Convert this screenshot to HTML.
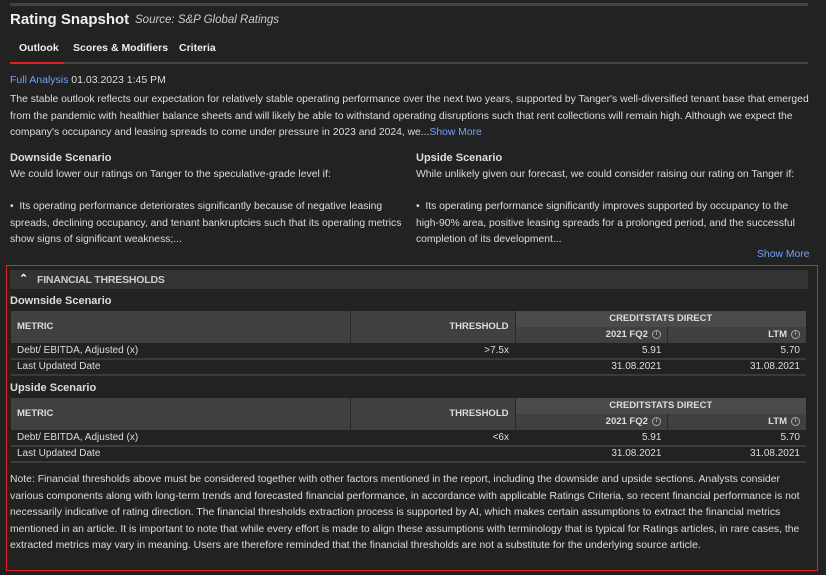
<!DOCTYPE html>
<html><head><style>
*{margin:0;padding:0;box-sizing:border-box}
body{width:826px;height:575px;background:#222;color:#ddd;font-family:"Liberation Sans",sans-serif;font-size:11px;position:relative;overflow:hidden}
.a{position:absolute;white-space:nowrap}
.p{position:absolute;left:10px;width:800px;line-height:16.5px;font-size:10.35px;white-space:normal}
.hl{color:#6fa3ff}
.b{font-weight:bold}
table{border-collapse:collapse;position:absolute;left:11px;width:795px;font-size:10px}
th{background:#404040;color:#ddd;font-weight:bold;font-size:9.5px;padding:0 6px;line-height:14px}
td{height:16px;padding:0 6px;border-bottom:2px solid #3a3a3a;line-height:14px}
.r{text-align:right}
.i{display:inline-block;width:9px;height:9px;border:1px solid #aaa;border-radius:50%;vertical-align:middle;margin-left:4px;font-size:6px;line-height:7px;text-align:center;font-weight:normal}
</style></head><body>
<div class="a" style="left:10px;top:3px;width:798px;height:3px;background:#444"></div>
<div class="a b" style="left:10px;top:11px;font-size:15px;color:#eee">Rating Snapshot</div>
<div class="a" style="left:135px;top:14px;font-size:11.5px;font-style:italic;color:#ccc">Source: S&amp;P Global Ratings</div>
<div class="a b" style="left:19px;top:42px;font-size:10.5px;color:#eee">Outlook</div>
<div class="a b" style="left:73px;top:42px;font-size:10.5px;color:#eee">Scores &amp; Modifiers</div>
<div class="a b" style="left:179px;top:42px;font-size:10.5px;color:#eee">Criteria</div>
<div class="a" style="left:10px;top:62px;width:798px;height:2px;background:#444"></div>
<div class="a" style="left:10px;top:62px;width:54px;height:2px;background:#e0202a"></div>
<div class="a" style="left:10px;top:74px;font-size:10.5px"><span class="hl">Full Analysis</span> 01.03.2023 1:45 PM</div>
<div class="p" style="top:92px;width:806px">The stable outlook reflects our expectation for relatively stable operating performance over the next two years, supported by Tanger's well-diversified tenant base that emerged from the pandemic with healthier balance sheets and will likely be able to withstand operating disruptions such that rent collections will remain high. Although we expect the company's occupancy and leasing spreads to come under pressure in 2023 and 2024, we...<span class="hl">Show More</span></div>
<div class="a b" style="left:10px;top:152px;font-size:11px">Downside Scenario</div>
<div class="a" style="left:10px;top:169px;font-size:10.4px">We could lower our ratings on Tanger to the speculative-grade level if:</div>
<div class="p" style="top:199px;width:400px">• &nbsp;Its operating performance deteriorates significantly because of negative leasing spreads, declining occupancy, and tenant bankruptcies such that its operating metrics show signs of significant weakness;...</div>
<div class="a b" style="left:416px;top:152px;font-size:11px">Upside Scenario</div>
<div class="a" style="left:416px;top:169px;font-size:10.4px">While unlikely given our forecast, we could consider raising our rating on Tanger if:</div>
<div class="p" style="top:199px;left:416px;width:390px">• &nbsp;Its operating performance significantly improves supported by occupancy to the high-90% area, positive leasing spreads for a prolonged period, and the successful completion of its development...</div>
<div class="a hl" style="left:757px;top:249px;font-size:10.4px">Show More</div>
<div class="a" style="left:6px;top:265px;width:812px;height:306px;border:1px solid #e0202a"></div>
<div class="a" style="left:10px;top:270px;width:798px;height:19px;background:#333"></div>
<div class="a b" style="left:19px;top:272px;font-size:11px;color:#fff">&#8963;</div>
<div class="a b" style="left:37px;top:274px;font-size:10.5px;color:#ccc;letter-spacing:-0.2px">FINANCIAL THRESHOLDS</div>
<div class="a b" style="left:10px;top:295px;font-size:11px">Downside Scenario</div>
<table style="top:311px">
<tr style="height:16px"><th rowspan="2" style="text-align:left;width:339px;border-right:1px solid #2a2a2a">METRIC</th><th rowspan="2" class="r" style="width:165px;border-right:1px solid #2a2a2a">THRESHOLD</th><th colspan="2" style="background:#4a4a4a">CREDITSTATS DIRECT</th></tr>
<tr style="height:16px"><th class="r" style="border-right:1px solid #2a2a2a">2021 FQ2<span class="i">i</span></th><th class="r">LTM<span class="i">i</span></th></tr>
<tr><td>Debt/ EBITDA, Adjusted (x)</td><td class="r">&gt;7.5x</td><td class="r">5.91</td><td class="r">5.70</td></tr>
<tr><td>Last Updated Date</td><td></td><td class="r">31.08.2021</td><td class="r">31.08.2021</td></tr>
</table>
<div class="a b" style="left:10px;top:382px;font-size:11px">Upside Scenario</div>
<table style="top:398px">
<tr style="height:16px"><th rowspan="2" style="text-align:left;width:339px;border-right:1px solid #2a2a2a">METRIC</th><th rowspan="2" class="r" style="width:165px;border-right:1px solid #2a2a2a">THRESHOLD</th><th colspan="2" style="background:#4a4a4a">CREDITSTATS DIRECT</th></tr>
<tr style="height:16px"><th class="r" style="border-right:1px solid #2a2a2a">2021 FQ2<span class="i">i</span></th><th class="r">LTM<span class="i">i</span></th></tr>
<tr><td>Debt/ EBITDA, Adjusted (x)</td><td class="r">&lt;6x</td><td class="r">5.91</td><td class="r">5.70</td></tr>
<tr><td>Last Updated Date</td><td></td><td class="r">31.08.2021</td><td class="r">31.08.2021</td></tr>
</table>
<div class="p" style="top:472px;width:798px;font-size:10.4px">Note: Financial thresholds above must be considered together with other factors mentioned in the report, including the downside and upside sections. Analysts consider various components along with long-term trends and forecasted financial performance, in accordance with applicable Ratings Criteria, so recent financial performance is not necessarily indicative of rating direction. The financial thresholds extraction process is supported by AI, which makes certain assumptions to extract the financial metrics mentioned in an article. It is important to note that while every effort is made to align these assumptions with terminology that is typical for Ratings articles, in rare cases, the extracted metrics may vary in meaning. Users are therefore reminded that the financial thresholds are not a substitute for the underlying source article.</div>
</body></html>
